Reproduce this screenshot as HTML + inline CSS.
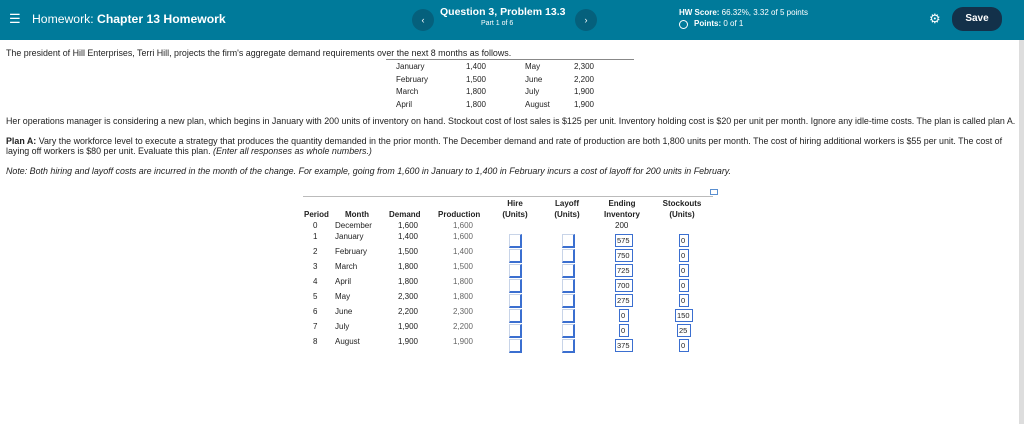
<!DOCTYPE html><html><head><style>
body{margin:0;width:1024px;height:424px;background:#fff;font-family:"Liberation Sans",sans-serif;position:relative;overflow:hidden;color:#222}
.a{position:absolute;white-space:nowrap}
.hd{position:absolute;left:0;top:0;width:1024px;height:40px;background:#007a9a;color:#fff}
.s{font-size:8.9px}
.t{font-size:8px}
.bx{position:absolute;width:10px;height:11px;border:1px solid #c8d4e8;border-right:2px solid #3b6fd0;border-bottom:2px solid #3b6fd0}
.in{position:absolute;height:11px;border:1px solid #3b6fd0;font-size:7.5px;line-height:11px;padding:0 1px;background:#fff}
.r{text-align:right}
</style></head><body>
<div class="hd">
<div class="a" style="left:9px;top:11px;font-size:13px">☰</div>
<div class="a" style="left:32px;top:12px;font-size:12.2px">Homework: <b>Chapter 13 Homework</b></div>
<div class="a" style="left:412px;top:9px;width:22px;height:22px;border-radius:11px;background:#05607c;text-align:center;line-height:22px;font-size:9px">‹</div>
<div class="a" style="left:440px;top:6px;font-size:10.5px;font-weight:bold">Question 3, Problem 13.3</div>
<div class="a" style="left:481px;top:20px;font-size:7px">Part 1 of 6</div>
<div class="a" style="left:575px;top:9px;width:22px;height:22px;border-radius:11px;background:#05607c;text-align:center;line-height:22px;font-size:9px">›</div>
<div class="a" style="left:679px;top:8px;font-size:8px"><b>HW Score:</b> 66.32%, 3.32 of 5 points</div>
<div class="a" style="left:679px;top:20px;width:7px;height:7px;border:1.5px solid #fff;border-radius:50%"></div>
<div class="a" style="left:694px;top:19px;font-size:8px"><b>Points:</b> 0 of 1</div>
<div class="a" style="left:929px;top:11px;font-size:13px">⚙</div>
<div class="a" style="left:952px;top:7px;width:50px;height:24px;border-radius:11px;background:#13314a;text-align:center;line-height:24px;font-size:10px;font-weight:bold">Save</div>
</div>
<div style="position:absolute;left:1019px;top:40px;width:5px;height:384px;background:#ddd"></div>
<div class="a s" style="left:6px;top:48px">The president of Hill Enterprises, Terri Hill, projects the firm's aggregate demand requirements over the next 8 months as follows.</div>
<div class="a" style="left:386px;top:59px;width:248px;border-top:1px solid #888"></div>
<div class="a t" style="left:396px;top:61px;line-height:12.5px">January<br>February<br>March<br>April</div>
<div class="a t r" style="left:462px;top:61px;line-height:12.5px;width:24px">1,400<br>1,500<br>1,800<br>1,800</div>
<div class="a t" style="left:525px;top:61px;line-height:12.5px">May<br>June<br>July<br>August</div>
<div class="a t r" style="left:570px;top:61px;line-height:12.5px;width:24px">2,300<br>2,200<br>1,900<br>1,900</div>
<div class="a s" style="left:6px;top:116px">Her operations manager is considering a new plan, which begins in January with 200 units of inventory on hand. Stockout cost of lost sales is $125 per unit. Inventory holding cost is $20 per unit per month. Ignore any idle-time costs. The plan is called plan A.</div>
<div class="a s" style="left:6px;top:136px"><b>Plan A:</b> Vary the workforce level to execute a strategy that produces the quantity demanded in the prior month. The December demand and rate of production are both 1,800 units per month. The cost of hiring additional workers is $55 per unit. The cost of</div>
<div class="a s" style="left:6px;top:146px">laying off workers is $80 per unit. Evaluate this plan. <i>(Enter all responses as whole numbers.)</i></div>
<div class="a s" style="left:6px;top:166px;font-style:italic">Note: Both hiring and layoff costs are incurred in the month of the change. For example, going from 1,600 in January to 1,400 in February incurs a cost of layoff for 200 units in February.</div>
<div class="a" style="left:710px;top:189px;width:6px;height:4px;border:1px solid #5a8fd0"></div>
<div class="a" style="left:303px;top:196px;width:410px;border-top:1px solid #bbb"></div>
<div class="a t" style="left:304px;top:210px;font-weight:bold">Period</div>
<div class="a t" style="left:345px;top:210px;font-weight:bold">Month</div>
<div class="a t" style="left:389px;top:210px;font-weight:bold">Demand</div>
<div class="a t" style="left:438px;top:210px;font-weight:bold">Production</div>
<div class="a t" style="left:500px;top:199px;font-weight:bold;text-align:center;width:30px;line-height:10.5px">Hire<br>(Units)</div>
<div class="a t" style="left:552px;top:199px;font-weight:bold;text-align:center;width:30px;line-height:10.5px">Layoff<br>(Units)</div>
<div class="a t" style="left:601px;top:199px;font-weight:bold;text-align:center;width:42px;line-height:10.5px">Ending<br>Inventory</div>
<div class="a t" style="left:660px;top:199px;font-weight:bold;text-align:center;width:44px;line-height:10.5px">Stockouts<br>(Units)</div>
<div id="rows"></div>
<script>
var d=[["0","December","1,600","1,600"],["1","January","1,400","1,600"],["2","February","1,500","1,400"],["3","March","1,800","1,500"],["4","April","1,800","1,800"],["5","May","2,300","1,800"],["6","June","2,200","2,300"],["7","July","1,900","2,200"],["8","August","1,900","1,900"]];
var ei=["","575","750","725","700","275","0","0","375"],so=["","0","0","0","0","0","150","25","0"];
var ys=[221,232,247,262,277,292,307,322,337],h="";
d.forEach(function(r,i){var y=ys[i];
h+='<div class="a t" style="left:313px;top:'+y+'px">'+r[0]+'</div><div class="a t" style="left:335px;top:'+y+'px">'+r[1]+'</div><div class="a t r" style="left:392px;top:'+y+'px;width:26px">'+r[2]+'</div><div class="a t r" style="left:447px;top:'+y+'px;width:26px;color:#666">'+r[3]+'</div>';
if(i==0){h+='<div class="a t" style="left:615px;top:'+y+'px">200</div>';}
else{var by=y+2;h+='<div class="bx" style="left:509px;top:'+by+'px"></div><div class="bx" style="left:562px;top:'+by+'px"></div>';
var w=ei[i].length*4+2;h+='<div class="in" style="left:'+(622-w/2)+'px;top:'+by+'px;width:'+w+'px">'+ei[i]+'</div>';
var w2=so[i].length*4+2;h+='<div class="in" style="left:'+(682-w2/2)+'px;top:'+by+'px;width:'+w2+'px">'+so[i]+'</div>';}
});
document.getElementById('rows').innerHTML=h;
</script>
</body></html>
